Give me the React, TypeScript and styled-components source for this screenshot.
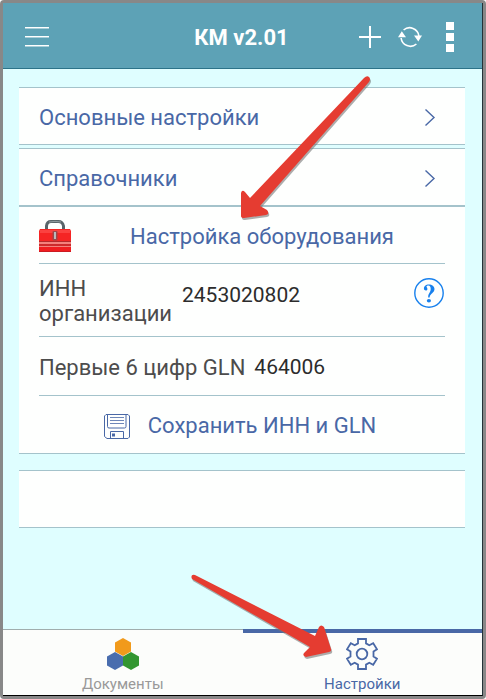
import React from "react";
import styled, { createGlobalStyle } from "styled-components";

const colors = {
  bar: "#5da2b6",
  barLine: "#2c7389",
  page: "#dffeff",
  line: "#a4c3cb",
  card: "#fefffe",
  accent: "#4968a6",
  label: "#4c4c4c",
  value: "#2c2c2c",
  red: "#e53c31",
};

const GlobalStyle = createGlobalStyle`
  *, *::before, *::after { box-sizing: border-box; }
  body {
    margin: 0;
    background: #fff;
    font-family: Roboto, "Liberation Sans", sans-serif;
  }
  button, input { font: inherit; color: inherit; }
  svg { display: block; flex: none; }
`;

const Device = styled.div`
  position: relative;
  display: flex;
  flex-direction: column;
  min-height: 100vh;
  border: 3px solid #888;
  border-radius: 4px;
  background: ${colors.page};
`;

const Screen = styled.div`
  position: relative;
  flex: 1;
  display: flex;
  flex-direction: column;
  border-right: 1px solid #243238;
  border-bottom: 1px solid #000;
`;

const AppBar = styled.header`
  display: grid;
  grid-template-columns: 1fr auto 1fr;
  align-items: center;
  height: 66px;
  padding: 3px 28px 0 22px;
  background: ${colors.bar};
  border-bottom: 1px solid ${colors.barLine};
  color: #fff;
`;

const Title = styled.h1`
  margin: 0;
  padding: 2px 0 0 4px;
  font-size: 22px;
  line-height: 26px;
  font-weight: 700;
`;

const IconButton = styled.button`
  display: flex;
  padding: 0;
  border: 0;
  background: none;
  cursor: pointer;
`;

const Actions = styled.div`
  display: flex;
  align-items: center;
  justify-content: flex-end;
  gap: 16px;
`;

const MoreButton = styled(IconButton)`
  margin-left: 8px;
`;

const Content = styled.main`
  flex: 1;
  display: flex;
  flex-direction: column;
  padding: 18px 17px 18px 16px;
`;

const Card = styled.section<{ $gap?: number; $joined?: boolean }>`
  margin-top: ${(p) => p.$gap ?? 0}px;
  background: ${colors.card};
  border: solid ${colors.line};
  border-width: ${(p) => (p.$joined ? 2 : 1)}px 0 1px;
  padding: 0 20px;
`;

const NavRow = styled.button`
  display: flex;
  align-items: center;
  justify-content: space-between;
  width: 100%;
  height: 56px;
  padding: 3px 9px 0 0;
  border: 0;
  background: none;
  color: ${colors.accent};
  font-size: 22px;
  line-height: 28px;
  text-align: left;
  cursor: pointer;
`;

const NavCard = styled(Card)<{ $open?: boolean }>`
  border-bottom-width: ${(p) => (p.$open ? 0 : 1)}px;
`;

const ToolRow = styled.button`
  display: flex;
  align-items: center;
  width: 100%;
  height: 57px;
  padding: 2px 0 0;
  border: 0;
  border-bottom: 1px solid ${colors.line};
  background: none;
  color: ${colors.accent};
  font-size: 22px;
  line-height: 28px;
  cursor: pointer;
`;

const ToolLabel = styled.span`
  flex: 1;
  padding: 2px 40px 0 48px;
  text-align: center;
  white-space: nowrap;
`;

const Field = styled.div<{ $tall?: boolean }>`
  display: flex;
  align-items: ${(p) => (p.$tall ? "flex-start" : "center")};
  gap: 9px;
  padding: ${(p) => (p.$tall ? "12px 0 10px" : "15px 0 13px")};
  border-bottom: 1px solid ${colors.line};
`;

const Label = styled.label<{ $narrow?: boolean }>`
  flex: none;
  width: ${(p) => (p.$narrow ? "134px" : "auto")};
  color: ${colors.label};
  font-size: 22px;
  line-height: 25px;
`;

const Value = styled.input<{ $tall?: boolean }>`
  flex: 1;
  min-width: 0;
  height: ${(p) => (p.$tall ? 38 : 30)}px;
  padding: 0;
  border: 0;
  outline: 0;
  background: none;
  color: ${colors.value};
  font-size: 21px;
`;

const Help = styled(IconButton)`
  padding: 2px 0 0;
  margin-right: 1px;
`;

const SaveRow = styled.button`
  display: flex;
  align-items: center;
  justify-content: center;
  gap: 18px;
  width: 100%;
  height: 57px;
  padding: 3px 4px 0 0;
  border: 0;
  background: none;
  color: ${colors.accent};
  font-size: 22px;
  line-height: 28px;
  cursor: pointer;
`;

const EmptyBody = styled.div`
  height: 56px;
`;

const Tabs = styled.nav`
  display: flex;
  background: #fcfdfb;
`;

const Tab = styled.button<{ $active?: boolean }>`
  flex: 1;
  display: flex;
  flex-direction: column;
  align-items: center;
  gap: 5px;
  height: 66px;
  padding: ${(p) => (p.$active ? 5 : 8)}px 0 0;
  border: 0;
  border-top: ${(p) => (p.$active ? `4px solid ${colors.accent}` : "1px solid #a0adad")};
  background: none;
  color: ${(p) => (p.$active ? colors.accent : "#999")};
  font-size: 15px;
  line-height: 18px;
  cursor: pointer;
`;

const TopPointer = styled.svg`
  position: absolute;
  top: 72px;
  right: 108px;
  pointer-events: none;
`;

const BottomPointer = styled.svg`
  position: absolute;
  bottom: 34px;
  right: 148px;
  pointer-events: none;
`;

const MenuIcon = () => (
  <svg width="24" height="22" viewBox="0 0 24 22" shapeRendering="crispEdges">
    {[1, 10, 19].map((y) => (
      <g key={y}>
        <rect y={y} width="24" height="1" fill="#fff" />
        <rect y={y + 1} width="24" height="1" fill="#a9ced8" />
      </g>
    ))}
  </svg>
);

const PlusIcon = () => (
  <svg width="24" height="24" viewBox="0 0 24 24" stroke="#fff" strokeWidth="2">
    <path d="M1 12H23M12 1V23" />
  </svg>
);

const SyncIcon = () => (
  <svg width="24" height="24" viewBox="0 0 24 24" fill="none" stroke="#fff" strokeWidth="1.6">
    <path d="M5.600 5A9.300 9.300 0 0 1 20.900 11M18.400 19A9.300 9.300 0 0 1 3.100 13" />
    <path d="M3.800 6.200L8 12.300H0ZM20.300 16.600L16 10.500H24Z" fill="#fff" stroke="none" />
  </svg>
);

const DotsIcon = () => (
  <svg width="8" height="30" viewBox="0 0 8 30" fill="#fff">
    <path d="M0 0H8V8H0ZM0 11H8V19H0ZM0 22H8V30H0Z" />
  </svg>
);

const Chevron = () => (
  <svg width="12" height="18" viewBox="0 0 12 18" fill="none" stroke={colors.accent} strokeWidth="1.4">
    <path d="M1.500 .5L10 8.500L1.500 16.500" />
  </svg>
);

const Toolbox = () => (
  <svg width="32" height="32" viewBox="0 0 32 32">
    <path d="M7.500 10V6Q8 1.500 12 1.500H19.500Q23.500 1.500 24.500 6V10" fill="none" stroke="#596469" strokeWidth="3" />
    <path d="M10 2Q16 .8 22 2" fill="none" stroke="#929da0" />
    <path d="M1 9H31L32 11V21H0V11Z" fill="#f52524" />
    <path d="M1 10H31V13H1Z" fill="#fb4240" />
    <path d="M0 21H32V22H0Z" fill="#b52a2c" />
    <path d="M0 22H32V24H0Z" fill="#f4817d" />
    <path d="M0 24H32V26H0Z" fill="#cc2b2d" />
    <path d="M0 26H32V27H0Z" fill="#f4817d" />
    <path d="M0 27H32V32H0Z" fill="#f01d20" />
    <path d="M0 31H32V32H0Z" fill="#cb1b21" />
    <rect x="13.500" y="11" width="5" height="9.500" rx="1" fill="#a04649" />
    <rect x="15" y="12" width="2" height="7" fill="#b9b9bc" />
  </svg>
);

const HelpIcon = () => (
  <svg width="30" height="30" viewBox="0 0 30 30">
    <circle cx="15" cy="15" r="14.2" fill="none" stroke="#1780ed" strokeWidth="1.4" />
    <path
      d="M10 11C9.500 8.200 12 6.400 14.800 6.400C18 6.400 20.500 8.400 20.500 11C20.500 15 16 15.300 15.600 19.400H14.200C14 15.400 16.700 14.800 16.700 11.100C16.700 9 16 7.600 14.400 7.600C13.200 7.600 12.400 8.200 12.500 8.800C12.600 9.300 13.400 9.900 13.400 10.900C13.400 12.900 10.300 13 10 11Z"
      fill="#1780ed"
    />
    <ellipse cx="14.900" cy="22.700" rx="2.100" ry="1.700" fill="#1780ed" />
  </svg>
);

const FloppyIcon = () => (
  <svg width="26" height="25" viewBox="0 0 26 25" fill="none" stroke={colors.accent} strokeWidth="1">
    <path d="M2 .5H24L25.500 2V23L24 24.500H3L.5 22.500V2Z" />
    <path d="M3.500 .5V12.500Q3.500 14 5 14H20.500Q22 14 22 12.500V.5M6.500 24V17.500H19.500V24" />
    <path d="M6 3.500H20M6 6.500H20M6 9.500H20" strokeWidth=".8" />
    <rect x="8" y="19.500" width="3" height="3" fill={colors.accent} stroke="none" />
  </svg>
);

const HexIcon = () => (
  <svg width="32" height="32" viewBox="0 0 32 32">
    <path d="M16 0L24 4.500V13.500L16 18L8 13.500V4.500Z" fill="#f19a1b" />
    <path d="M8 14L16 18.500V27.500L8 32L0 27.500V18.500Z" fill="#496dae" />
    <path d="M24 14L32 18.500V27.500L24 32L16 27.500V18.500Z" fill="#339631" />
  </svg>
);

const GearIcon = () => (
  <svg width="32" height="32" viewBox="0 0 32 32" fill="none" stroke={colors.accent} strokeWidth="1.8">
    <path d="M12 1H20V5.400L23.300 7.300L27.200 5.200L31 11.300L27.500 13.500V18.500L31 20.700L27.200 26.800L23.300 24.700L20 26.600V31H12V26.600L8.700 24.700L4.800 26.800L1 20.700L4.500 18.500V13.500L1 11.300L4.800 5.200L8.700 7.300L12 5.400Z" />
    <circle cx="16" cy="16" r="5.300" />
  </svg>
);

const topArrow =
  "M124 3Q127 0 129 2Q131 4 129 7L20 131L27 135Q30 139 26 140L4 143Q1 143 1 141V118Q2 114 5 117L10 123Z";

const bottomArrow =
  "M5 2L125 63L129 54Q131 51 134 54L141 76Q142 78 139 79L116 84Q112 83 114 80L120 74L2 6Q0 1 5 2Z";

const ArrowShape = ({ d }: { d: string }) => (
  <>
    <path d={d} fill="#777" opacity=".6" transform="translate(1 2)" />
    <path d={d} fill={colors.red} />
  </>
);

export default function App() {
  return (
    <>
      <GlobalStyle />
      <Device>
        <Screen>
          <AppBar>
            <IconButton aria-label="Меню">
              <MenuIcon />
            </IconButton>
            <Title>КМ v2.01</Title>
            <Actions>
              <IconButton aria-label="Добавить">
                <PlusIcon />
              </IconButton>
              <IconButton aria-label="Обновить">
                <SyncIcon />
              </IconButton>
              <MoreButton aria-label="Ещё">
                <DotsIcon />
              </MoreButton>
            </Actions>
          </AppBar>

          <Content>
            <NavCard>
              <NavRow>
                Основные настройки
                <Chevron />
              </NavRow>
            </NavCard>
            <NavCard $gap={3} $open>
              <NavRow>
                Справочники
                <Chevron />
              </NavRow>
            </NavCard>
            <Card $joined>
              <ToolRow>
                <Toolbox />
                <ToolLabel>Настройка оборудования</ToolLabel>
              </ToolRow>
              <Field $tall>
                <Label htmlFor="inn" $narrow>
                  ИНН организации
                </Label>
                <Value id="inn" $tall defaultValue="2453020802" />
                <Help aria-label="Справка">
                  <HelpIcon />
                </Help>
              </Field>
              <Field>
                <Label htmlFor="gln">Первые 6 цифр GLN</Label>
                <Value id="gln" defaultValue="464006" />
              </Field>
              <SaveRow>
                <FloppyIcon />
                Сохранить ИНН и GLN
              </SaveRow>
            </Card>
            <Card $gap={16}>
              <EmptyBody />
            </Card>
          </Content>

          <Tabs>
            <Tab>
              <HexIcon />
              Документы
            </Tab>
            <Tab $active>
              <GearIcon />
              Настройки
            </Tab>
          </Tabs>

          <TopPointer width="134" height="148" viewBox="0 0 134 148">
            <ArrowShape d={topArrow} />
          </TopPointer>
          <BottomPointer width="144" height="88" viewBox="0 0 144 88">
            <ArrowShape d={bottomArrow} />
          </BottomPointer>
        </Screen>
      </Device>
    </>
  );
}
